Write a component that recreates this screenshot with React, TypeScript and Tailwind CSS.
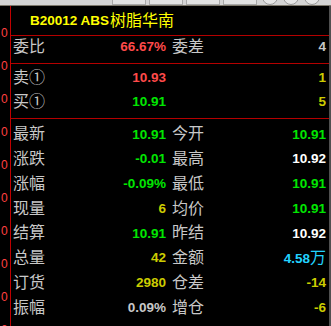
import React from "react";

type Cell = { label: string; value: React.ReactNode; color: string };

const RED = "text-[#ff4a4a]";
const GREEN = "text-[#00e600]";
const YELLOW = "text-[#cccc00]";
const WHITE = "text-white";
const GRAY = "text-[#c8c8c8]";
const CYAN = "text-[#22d3ff]";

const mainRows: [Cell, Cell][] = [
  [
    { label: "最新", value: "10.91", color: GREEN },
    { label: "今开", value: "10.91", color: GREEN },
  ],
  [
    { label: "涨跌", value: "-0.01", color: GREEN },
    { label: "最高", value: "10.92", color: WHITE },
  ],
  [
    { label: "涨幅", value: "-0.09%", color: GREEN },
    { label: "最低", value: "10.91", color: GREEN },
  ],
  [
    { label: "现量", value: "6", color: YELLOW },
    { label: "均价", value: "10.91", color: GREEN },
  ],
  [
    { label: "结算", value: "10.91", color: GREEN },
    { label: "昨结", value: "10.92", color: WHITE },
  ],
  [
    { label: "总量", value: "42", color: YELLOW },
    {
      label: "金额",
      value: (
        <>
          4.58<span className="text-[16px] font-normal">万</span>
        </>
      ),
      color: CYAN,
    },
  ],
  [
    { label: "订货", value: "2980", color: YELLOW },
    { label: "仓差", value: "-14", color: YELLOW },
  ],
  [
    { label: "振幅", value: "0.09%", color: GRAY },
    { label: "增仓", value: "-6", color: YELLOW },
  ],
];

const Half = ({ cell, left }: { cell: Cell; left?: boolean }) => (
  <div
    className={
      left
        ? "w-[157px] flex items-center justify-between pl-[2px] pr-[2px]"
        : "flex-1 flex items-center justify-between pl-[4px] pr-[3px]"
    }
  >
    <span className="text-[16px] text-[#c8c8c8] leading-none">{cell.label}</span>
    <span className={`text-[13.5px] font-bold leading-none ${cell.color}`}>{cell.value}</span>
  </div>
);

const Row = ({ a, b, h }: { a: Cell; b: Cell; h: string }) => (
  <div className={`flex ${h}`}>
    <Half cell={a} left />
    <Half cell={b} />
  </div>
);

const Line = () => <div className="h-[1px] bg-[#b40000]" />;

export default function App() {
  return (
    <div className="w-[331px] h-[326px] bg-black overflow-hidden flex flex-col font-['Liberation_Sans','Noto_Sans_CJK_SC',sans-serif]">
      {/* window strip */}
      <div className="h-[5px] bg-[#d4d4d4] flex overflow-hidden shrink-0">
        <div className="ml-[112px] flex gap-[3px]">
          <div className="w-[34px] h-[5px] bg-[#e2e2e2] border-x border-b border-[#a8a8a8]" />
          <div className="w-[34px] h-[5px] bg-[#e2e2e2] border-x border-b border-[#a8a8a8]" />
          <div className="w-[34px] h-[5px] bg-[#e2e2e2] border-x border-b border-[#a8a8a8]" />
          <div className="w-[34px] h-[5px] bg-[#e2e2e2] border-x border-b border-[#a8a8a8]" />
        </div>
        <div className="ml-[5px] flex gap-[5px]">
          <div className="w-[16px] h-[16px] -mt-[11px] rounded-full border border-[#9a9a9a] bg-[#e6e6e6]" />
          <div className="w-[16px] h-[16px] -mt-[11px] rounded-full border border-[#9a9a9a] bg-[#e6e6e6]" />
          <div className="w-[16px] h-[16px] -mt-[11px] rounded-full border border-[#9a9a9a] bg-[#e6e6e6]" />
        </div>
      </div>
      <div className="h-[1px] bg-[#7d786b] shrink-0" />

      <div className="flex flex-1 min-h-0">
        {/* axis of the neighbouring chart */}
        <div className="w-[10px] pt-[10px] flex flex-col overflow-hidden">
          {Array.from({ length: 10 }).map((_, i) => (
            <div key={i} className="h-[33px] shrink-0 flex items-center pl-[1px] text-[12px] leading-none text-[#ff4040]">
              0
            </div>
          ))}
        </div>
        <div className="w-[1px] bg-[#c00000]" />

        <div className="w-[318px] flex flex-col">
          <div className="h-[29px] flex items-center pl-[19px] pt-[1px] text-[#ffff00]">
            <span className="w-[80px] shrink-0 text-[13.5px] font-bold leading-none whitespace-pre">B20012 ABS</span>
            <span className="w-[64px] shrink-0 text-[16px] leading-none">树脂华南</span>
          </div>
          <Line />
          <div className="h-[27px]">
            <Row
              h="h-[21px]"
              a={{ label: "委比", value: "66.67%", color: RED }}
              b={{ label: "委差", value: "4", color: GRAY }}
            />
          </div>
          <Line />
          <div className="h-[54px] pt-[2px]">
            <Row
              h="h-[24px]"
              a={{ label: "卖①", value: "10.93", color: RED }}
              b={{ label: "", value: "1", color: YELLOW }}
            />
            <Row
              h="h-[24px]"
              a={{ label: "买①", value: "10.91", color: GREEN }}
              b={{ label: "", value: "5", color: YELLOW }}
            />
          </div>
          <Line />
          <div className="pt-[3px]">
            {mainRows.map(([a, b], i) => (
              <Row key={i} h="h-[24.75px]" a={a} b={b} />
            ))}
          </div>
        </div>
        <div className="w-[2px] bg-[#505050]" />
      </div>
    </div>
  );
}
